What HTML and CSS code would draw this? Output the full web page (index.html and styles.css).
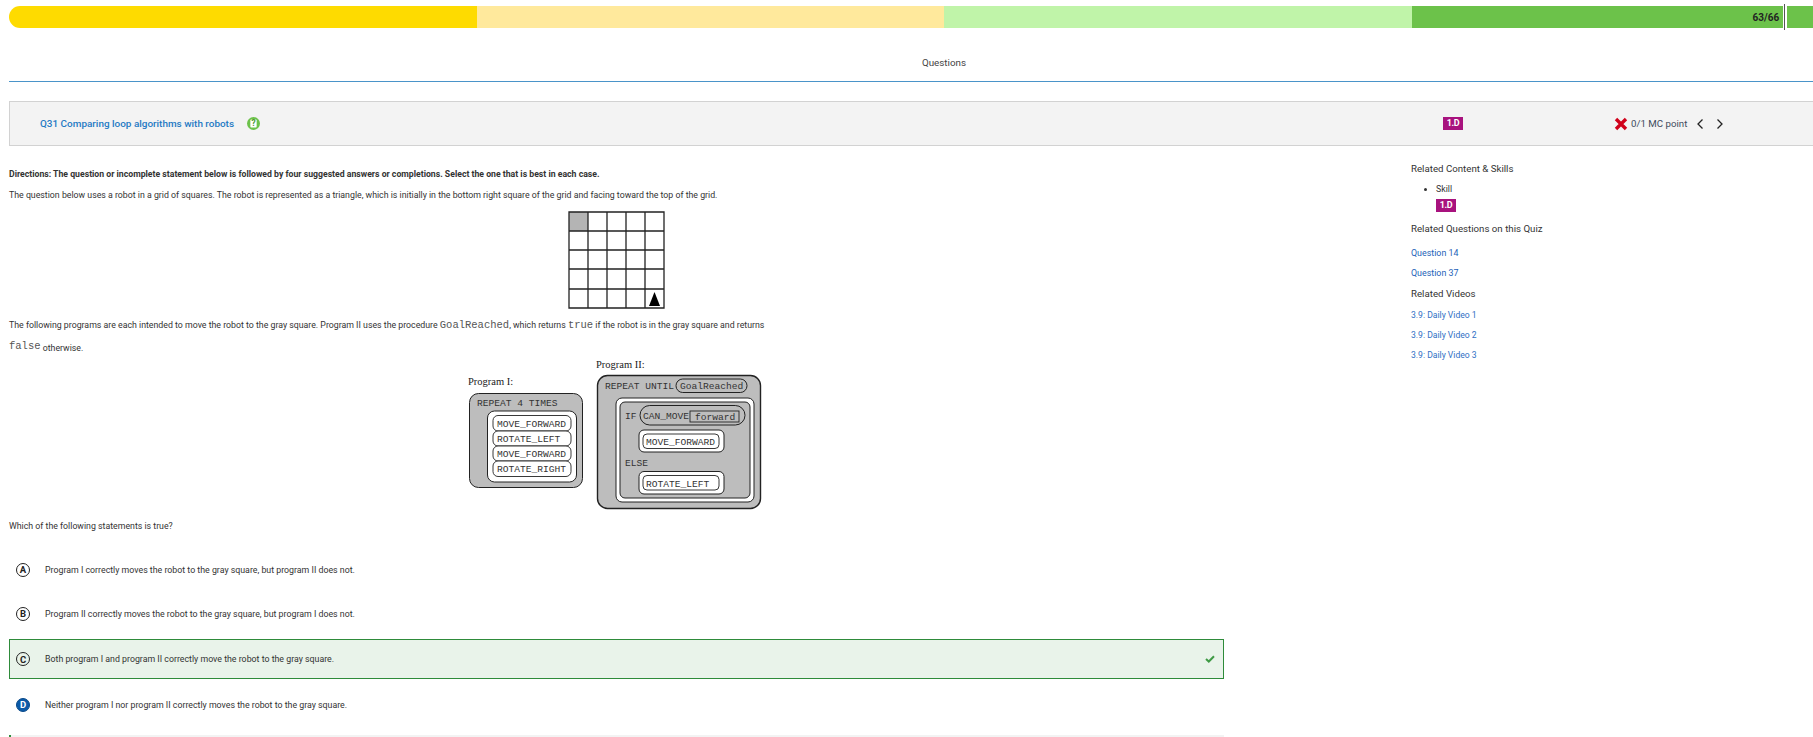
FILE: index.html
```html
<!DOCTYPE html>
<html lang="en">
<head>
<meta charset="utf-8">
<title>Questions</title>
<link rel="stylesheet" href="styles.css">
</head>
<body>
<div class="progress">
  <div class="seg seg-a"></div>
  <div class="seg seg-b"></div>
  <div class="seg seg-c"></div>
  <div class="seg seg-d"><span class="count">63/66</span><i class="marker"></i></div>
</div>
<div class="title">Questions</div>
<header class="qhead">
  <div class="qname">Q31 Comparing loop algorithms with robots
    <svg class="qicon" width="13" height="13" viewBox="0 0 14 14"><circle cx="7" cy="7" r="7" fill="#6cc24a"/><rect x="3.6" y="2.8" width="6.8" height="8.4" rx="1" fill="#fff"/><text x="7" y="10" text-anchor="middle" class="qmark">?</text></svg>
  </div>
  <span class="badge head-badge">1.D</span>
  <div class="score">
    <svg width="14" height="14" viewBox="0 0 14 14"><path d="M2 2 L12 12 M12 2 L2 12" stroke="#d0021b" stroke-width="3.4"/></svg>
    <span>0/1 MC point</span>
    <svg class="chev" width="8" height="12" viewBox="0 0 8 12"><path d="M6.5 1.5 L2 6 L6.5 10.5" fill="none" stroke="#222" stroke-width="1.3"/></svg>
    <svg class="chev" width="8" height="12" viewBox="0 0 8 12"><path d="M1.5 1.5 L6 6 L1.5 10.5" fill="none" stroke="#222" stroke-width="1.3"/></svg>
  </div>
</header>
<div class="layout">
  <main class="content">
    <p class="directions">Directions: The question or incomplete statement below is followed by four suggested answers or completions. Select the one that is best in each case.</p>
    <p class="para">The question below uses a robot in a grid of squares. The robot is represented as a triangle, which is initially in the bottom right square of the grid and facing toward the top of the grid.</p>
    <svg class="grid-fig" width="98" height="99" viewBox="0 0 98 99">
      <rect x="1" y="1" width="19" height="19" fill="#b4b4b4"/>
      <path d="M1 1H96V97H1Z M20 1V97 M39 1V97 M58 1V97 M77 1V97 M1 20H96 M1 39H96 M1 58H96 M1 78H96" fill="none" stroke="#222" stroke-width="1.3"/>
      <path d="M86.5 81 L92 95 L81 95 Z" fill="#000"/>
    </svg>
    <p class="para para-code">The following programs are each intended to move the robot to the gray square. Program II uses the procedure <code>GoalReached</code>, which returns <code>true</code> if the robot is in the gray square and returns<br><code>false</code> <span class="low">otherwise.</span></p>
    <svg class="prog-fig" width="296" height="156" viewBox="467 357 296 156">
      <text x="468" y="385" class="serif">Program I:</text>
      <rect x="469.5" y="393.5" width="113" height="94" rx="9" class="gray"/>
      <text x="477" y="406" class="mono">REPEAT 4 TIMES</text>
      <rect x="487.5" y="411" width="89" height="71" rx="7" class="white"/>
      <rect x="493" y="415.5" width="78" height="15.500" rx="5" class="white thin"/>
      <rect x="493" y="431" width="78" height="15" rx="5" class="white thin"/>
      <rect x="493" y="446" width="78" height="15" rx="5" class="white thin"/>
      <rect x="493" y="461" width="78" height="15.500" rx="5" class="white thin"/>
      <text x="497" y="427" class="mono">MOVE_FORWARD</text>
      <text x="497" y="442" class="mono">ROTATE_LEFT</text>
      <text x="497" y="457" class="mono">MOVE_FORWARD</text>
      <text x="497" y="472" class="mono">ROTATE_RIGHT</text>

      <text x="596" y="368" class="serif">Program II:</text>
      <rect x="597.500" y="375.500" width="163" height="133" rx="10" class="gray heavy"/>
      <text x="605" y="389" class="mono">REPEAT UNTIL</text>
      <rect x="676" y="379" width="71" height="13.500" rx="6.700" class="gray"/>
      <text x="680" y="389" class="mono">GoalReached</text>
      <rect x="616" y="398" width="138" height="104" rx="6" class="white"/>
      <rect x="620" y="402" width="130" height="96" rx="5" class="gray"/>
      <text x="625" y="419" class="mono">IF</text>
      <rect x="640" y="405.500" width="105" height="19.500" rx="9.700" class="gray"/>
      <rect x="690" y="411" width="49" height="11" class="gray thin"/>
      <text x="643" y="419" class="mono">CAN_MOVE</text>
      <text x="695" y="419.500" class="mono">forward</text>
      <rect x="639" y="430" width="85" height="22" rx="5" class="white"/>
      <rect x="643" y="434" width="76" height="14.500" rx="4" class="white thin"/>
      <text x="646" y="445" class="mono">MOVE_FORWARD</text>
      <text x="625" y="466" class="mono">ELSE</text>
      <rect x="639" y="471.500" width="85" height="22.500" rx="5" class="white"/>
      <rect x="643" y="475.500" width="76" height="14.500" rx="4" class="white thin"/>
      <text x="646" y="487" class="mono">ROTATE_LEFT</text>
    </svg>
    <p class="para para-which">Which of the following statements is true?</p>
    <div class="option"><span class="letter">A</span><span>Program I correctly moves the robot to the gray square, but program II does not.</span></div>
    <div class="option"><span class="letter">B</span><span>Program II correctly moves the robot to the gray square, but program I does not.</span></div>
    <div class="option correct"><span class="letter">C</span><span>Both program I and program II correctly move the robot to the gray square.</span>
      <svg class="check" width="10" height="8" viewBox="0 0 10 8"><path d="M1 4 L3.800 6.500 L9 1.200" fill="none" stroke="#3f9a45" stroke-width="2"/></svg>
    </div>
    <div class="option"><span class="letter selected">D</span><span>Neither program I nor program II correctly moves the robot to the gray square.</span></div>
    <div class="explain"></div>
  </main>
  <aside class="side">
    <h3>Related Content &amp; Skills</h3>
    <ul class="skills"><li>Skill<br><span class="badge">1.D</span></li></ul>
    <h3>Related Questions on this Quiz</h3>
    <a class="qlink">Question 14</a>
    <a class="qlink">Question 37</a>
    <h3 class="videos">Related Videos</h3>
    <a class="vlink">3.9: Daily Video 1</a>
    <a class="vlink">3.9: Daily Video 2</a>
    <a class="vlink">3.9: Daily Video 3</a>
  </aside>
</div>
</body>
</html>
```
FILE: styles.css
```css
html, body { margin: 0; height: 737px; overflow: hidden; background: #fff; }
body { font-family: Roboto, "Liberation Sans", sans-serif; font-size: 10px; color: #333; }
p { margin: 0; }

.progress { display: flex; margin: 6px 0 0 9px; width: 1870px; height: 22px; position: relative; }
.seg { flex: 0 0 467.500px; }
.seg-a { background: #fedb00; border-radius: 11px 0 0 11px; }
.seg-b { background: #ffe99c; }
.seg-c { background: #c0f4a9; }
.seg-d { background: #6cc24a; position: relative; display: flex; align-items: center; padding-left: 341px; box-sizing: border-box; }
.count { font-size: 10px; font-weight: 700; color: #222; }
.marker { position: absolute; left: 372px; top: -2px; width: 1px; height: 26px; background: #555; box-shadow: -1px 0 0 #fff, 1px 0 0 #fff, 2px 0 0 #fff; }

.title { width: 1870px; height: 54px; box-sizing: border-box; margin-left: 9px; padding-top: 29px; text-align: center; font-size: 9.800px; color: #444; border-bottom: 1px solid #4a94c9; }

.qhead { margin: 19px 0 0 9px; width: 1870px; height: 45px; box-sizing: border-box; background: #f3f3f3; border: 1px solid #d2d2d2; border-right: 0; display: flex; align-items: center; padding-left: 30px; }
.qname { width: 1403px; font-size: 9.950px; font-weight: 500; color: #1f7ac4; display: flex; align-items: center; gap: 13px; }
.qicon { display: block; }
.qmark { font-size: 9px; font-weight: 700; fill: #4a9a2c; }
.badge { display: inline-block; background: #a8127e; color: #fff; font-size: 9px; font-weight: 700; width: 20px; height: 13px; line-height: 13px; text-align: center; letter-spacing: -.3px; }
.score { margin-left: 151px; display: flex; align-items: center; font-size: 9.700px; color: #3d4a5c; }
.score span { margin: 0 9px 0 3px; }
.chev { margin-right: 12px; }

.layout { display: grid; grid-template-columns: 1215px 1fr; column-gap: 187px; margin-left: 9px; }
.content { display: flex; flex-direction: column; }
.directions { font-weight: 700; font-size: 8.700px; line-height: 12px; margin-top: 22px; color: #333; }
.para { font-size: 8.780px; line-height: 12px; color: #333; }
.directions + .para { margin-top: 9px; }
.grid-fig { align-self: center; margin-top: 10px; display: block; }
.para-code { margin-top: 5px; line-height: 21px; }
.para-code code { font-family: "Liberation Mono", monospace; font-size: 10.500px; color: #555; }
.low { position: relative; top: 2px; }
.prog-fig { align-self: center; margin: 0 3px 0 0; display: block; }
.para-which { margin-top: 7px; }

.serif { font-family: "Liberation Serif", serif; font-size: 10.500px; fill: #222; }
.mono { font-family: "Liberation Mono", monospace; font-size: 9.600px; fill: #333; }
.gray { fill: #bdbdbd; stroke: #222; stroke-width: 1; }
.heavy { stroke-width: 1.400; }
.white { fill: #fff; stroke: #222; stroke-width: 1; }
.thin { stroke-width: .9; }

.option { height: 39px; box-sizing: border-box; display: flex; align-items: center; padding-left: 6px; gap: 15px; font-size: 8.800px; color: #333; margin-top: 5px; border: 1px solid transparent; position: relative; }
.para-which + .option { margin-top: 18px; }
.letter { width: 12px; height: 12px; border: 1.500px solid #222; border-radius: 50%; display: flex; align-items: center; justify-content: center; font-size: 9.500px; font-weight: 700; color: #222; flex: none; }
.correct { background: #e9f3ea; border-color: #2e8b3a; height: 40px; margin-top: 6px; }
.correct + .option { margin-top: 6px; }
.selected { background: #0a5aa8; border-color: #0a4a8a; color: #fff; }
.check { position: absolute; right: 8px; top: 15px; }
.explain { margin-top: 11px; height: 20px; background: #f3f3f3; border-left: 2px solid #2e8b3a; }

.side { font-size: 8.800px; }
.side h3 { margin: 17px 0 0; font-size: 9.700px; font-weight: 400; line-height: 12px; color: #333; }
.skills { margin: 8px 0 0; padding: 0 0 0 25px; line-height: 13px; color: #333; }
.skills .badge { margin-top: 3px; display: block; }
.side .skills + h3 { margin-top: 11px; }
.qlink { display: block; color: #1d5fb8; font-size: 8.900px; line-height: 12px; margin-top: 8px; }
h3 + .qlink { margin-top: 12px; }
.side .videos { margin-top: 9px; }
.vlink { display: block; color: #2f6fc4; font-size: 8.600px; line-height: 12px; margin-top: 8px; }
h3 + .vlink { margin-top: 9px; }
```
